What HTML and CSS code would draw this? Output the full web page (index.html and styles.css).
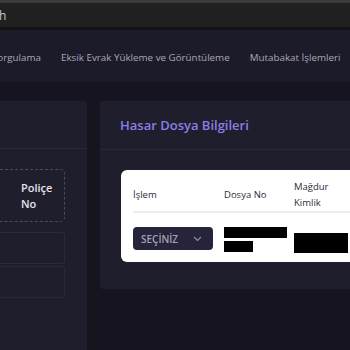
FILE: index.html
```html
<!DOCTYPE html>
<html lang="tr">
<head>
  <meta charset="UTF-8">
  <meta name="viewport" content="width=device-width, initial-scale=1.0"/>
  <title>Hasar Dosya Bilgileri</title>
  <link rel="stylesheet" href="styles.css">
</head>
<body>
  <div class="browser-bar">
    <span class="url">h</span>
  </div>

  <nav class="nav">
    <a class="nav-item first">Sorgulama</a>
    <a class="nav-item">Eksik Evrak Yükleme ve Görüntüleme</a>
    <a class="nav-item">Mutabakat İşlemleri</a>
  </nav>

  <main class="main">
    <!-- sol panel: arama -->
    <section class="panel side">
      <div class="panel-head"></div>
      <div class="search-type">
        <span class="type-label">Poliçe<br>No</span>
      </div>
      <div class="field"></div>
      <div class="field"></div>
    </section>

    <!-- sağ panel: dosya bilgileri -->
    <section class="panel info">
      <h2 class="panel-title">Hasar Dosya Bilgileri</h2>
      <div class="card">
        <div class="row head">
          <div class="col c1">İşlem</div>
          <div class="col c2">Dosya No</div>
          <div class="col c3">Mağdur<br>Kimlik</div>
        </div>
        <div class="row body">
          <div class="col c1">
            <button class="select">SEÇİNİZ
              <svg width="9" height="6" viewBox="0 0 9 6"><path d="M1 1l3.5 3.5L8 1" fill="none" stroke="#8d8c9e" stroke-width="1.2"/></svg>
            </button>
          </div>
          <div class="col c2">
            <div class="redact r1"></div>
            <div class="redact r2"></div>
          </div>
          <div class="col c3">
            <div class="redact r3"></div>
          </div>
        </div>
      </div>
    </section>
  </main>
</body>
</html>
```

FILE: styles.css
```css
* {
  box-sizing: border-box;
  margin: 0;
  padding: 0;
  font-family: 'Open Sans', sans-serif;
}

body {
  width: 350px;
  height: 350px;
  overflow: hidden;
  background: #16151f;
}

.browser-bar {
  height: 30px;
  background: #202020;
  border-top: 3px solid #3b3b3b;
  border-bottom: 3px solid #121212;
  display: flex;
  align-items: center;
  color: #c8c8c8;
  font-size: 12px;
}

.url {
  margin-left: -1px;
}

.nav {
  height: 52px;
  background: #1c1b2a;
  display: flex;
  align-items: center;
  gap: 20px;
  padding-top: 2px;
  white-space: nowrap;
  overflow: hidden;
}

.nav-item {
  color: #a9a8b9;
  font-size: 9.8px;
}

.nav-item.first {
  margin-left: -8px;
}

.main {
  display: flex;
  gap: 13px;
  padding-top: 19px;
  align-items: flex-start;
}

.panel {
  background: #1f1e2c;
  border-radius: 4px;
}

.side {
  width: 87px;
  flex-shrink: 0;
  height: 260px;
  border-radius: 0 4px 0 0;
}

.panel-head {
  height: 48px;
  border-bottom: 1px solid #2a2939;
}

.search-type {
  margin-top: 20px;
  width: 65px;
  height: 53px;
  border: 1px dashed #4a4870;
  border-left: none;
  border-radius: 0 5px 5px 0;
  display: flex;
  align-items: center;
  padding-left: 21px;
}

.type-label {
  color: #e4e3ee;
  font-size: 11px;
  font-weight: 600;
  line-height: 16px;
}

.field {
  width: 65px;
  height: 32px;
  margin-top: 10px;
  border: 1px solid #2b2a3a;
  border-left: none;
  border-radius: 0 3px 3px 0;
}

.field + .field {
  margin-top: 2px;
}

.info {
  flex: 1;
  min-width: 0;
  height: 188px;
  padding: 0 0 0 21px;
  border-radius: 4px 0 0 4px;
}

.panel-title {
  height: 49px;
  display: flex;
  align-items: center;
  margin-left: -21px;
  padding-left: 20px;
  border-bottom: 1px solid #2a2939;
  color: #8a7fe6;
  font-size: 13px;
  font-weight: 600;
}

.card {
  margin-top: 20px;
  background: #ffffff;
  border-radius: 6px 0 0 6px;
  height: 92px;
  padding-left: 12px;
  overflow: hidden;
}

.row {
  display: flex;
  white-space: nowrap;
}

.row.head {
  height: 43px;
  padding-top: 8px;
  align-items: center;
  border-bottom: 2px solid #eeeef2;
  color: #2c2b38;
  font-size: 9.5px;
  line-height: 16px;
}

.col.c1 { width: 91px; flex-shrink: 0; }
.col.c2 { width: 70px; flex-shrink: 0; }
.col.c3 { width: 70px; flex-shrink: 0; }

.row.body {
  padding-top: 14px;
}

.select {
  width: 80px;
  height: 23px;
  background: #25243a;
  border: none;
  border-radius: 4px;
  color: #a4a3b6;
  font-size: 10px;
  font-weight: 600;
  display: flex;
  align-items: center;
  justify-content: space-between;
  padding: 0 11px 0 8px;
}

.redact {
  background: #000;
}

.r1 { width: 63px; height: 11px; }
.r2 { width: 29px; height: 11px; margin-top: 3px; }
.r3 { width: 54px; height: 20px; margin-top: 6px; }
```
